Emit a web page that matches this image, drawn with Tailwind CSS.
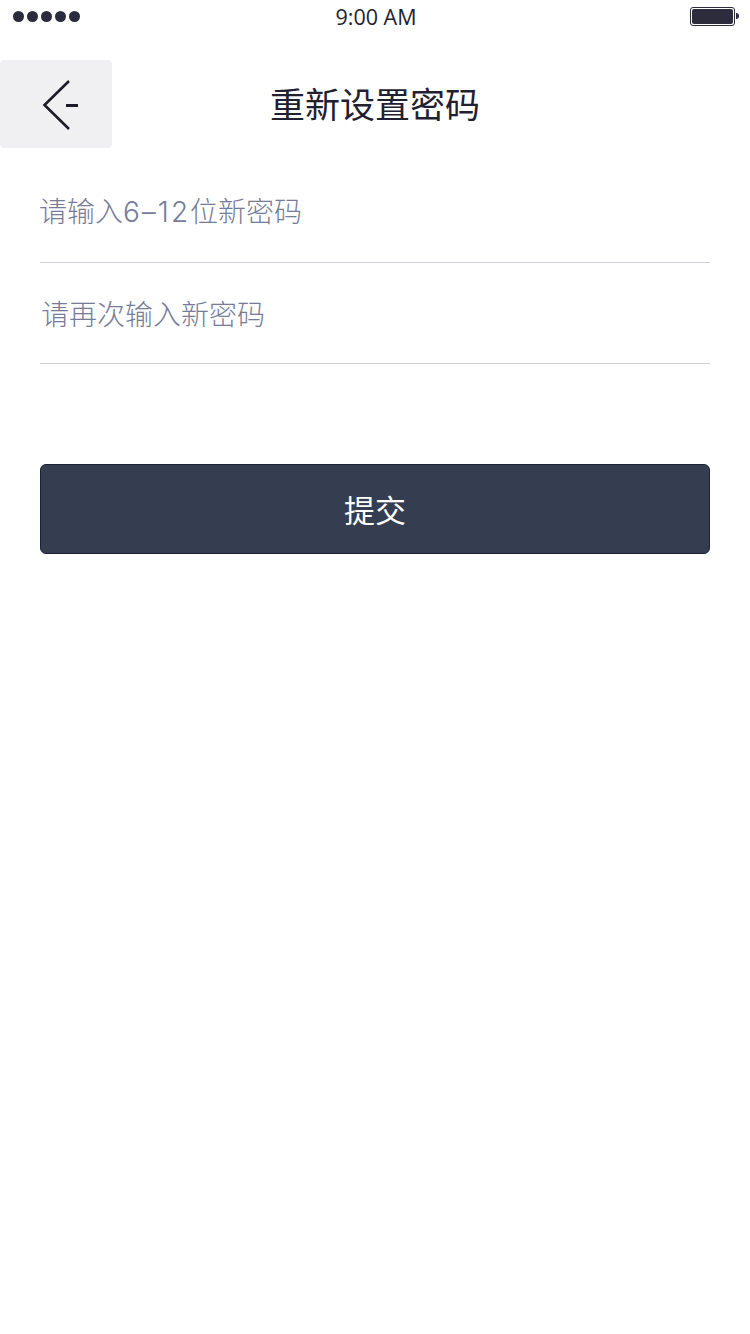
<!DOCTYPE html>
<html lang="zh-CN">
<head>
<meta charset="utf-8">
<script src="https://cdn.jsdelivr.net/npm/@tailwindcss/browser@4"></script>
</head>
<body class="bg-white font-['Inter','Noto_Sans_CJK_SC',sans-serif]">
<div class="w-[750px] h-[1334px] bg-white flex flex-col overflow-hidden">
  <div class="h-[32px] flex items-center pl-[13px] pr-[11px] shrink-0">
    <div class="flex-1 flex gap-[3px]">
      <span class="w-[11px] h-[11px] rounded-full bg-[#2b2b3d]"></span>
      <span class="w-[11px] h-[11px] rounded-full bg-[#2b2b3d]"></span>
      <span class="w-[11px] h-[11px] rounded-full bg-[#2b2b3d]"></span>
      <span class="w-[11px] h-[11px] rounded-full bg-[#2b2b3d]"></span>
      <span class="w-[11px] h-[11px] rounded-full bg-[#2b2b3d]"></span>
    </div>
    <div class="mt-[2px] text-[21.500px] leading-[32px] text-[#22222f] font-['Open_Sans',sans-serif]">9:00 AM</div>
    <div class="flex-1 flex items-center justify-end gap-[1px]">
      <div class="w-[45px] h-[19px] rounded-[3px] border border-[#2b2b3d] p-[1px]">
        <div class="w-full h-full rounded-[2px] bg-[#2d2c3c]"></div>
      </div>
      <div class="w-[3px] h-[6px] rounded-r-full bg-[#2b2b3d]"></div>
    </div>
  </div>
  <div class="mt-[28px] h-[88px] relative flex items-center justify-center shrink-0">
    <div class="absolute left-0 top-0 w-[112px] h-[88px] rounded-[4px] bg-[#f0f0f2] flex items-center justify-center">
      <svg width="112" height="88" viewBox="0 0 112 88" fill="none" stroke="#1c1c28" stroke-width="2.600">
        <path d="M69 21 L44.500 45 L69 69"/>
        <path d="M66 45.500 H78" stroke-width="3"/>
      </svg>
    </div>
    <h1 class="-mt-[2px] text-[35px] leading-[88px] font-normal text-[#1f2130] font-['Noto_Sans_CJK_SC',sans-serif]">重新设置密码</h1>
  </div>
  <div class="mx-[40px] flex flex-col shrink-0">
    <div class="h-[115px] border-b border-[#cfcfdb] pt-[40px] text-[28px] leading-[48px] font-light text-[#767c98]"><span class="-ml-[1px]">请输入<span class="tracking-[2px]">6–12</span>位新密码</span></div>
    <div class="h-[101px] border-b border-[#cfcfdb] pt-[28px] pl-[1px] text-[28px] leading-[48px] font-light text-[#767c98]">请再次输入新密码</div>
    <button class="mt-[100px] h-[90px] rounded-[6px] border border-[#1c2238] bg-[#353d50] text-white text-[31px] font-normal font-['Noto_Sans_CJK_SC',sans-serif]">提交</button>
  </div>
</div>
</body>
</html>
